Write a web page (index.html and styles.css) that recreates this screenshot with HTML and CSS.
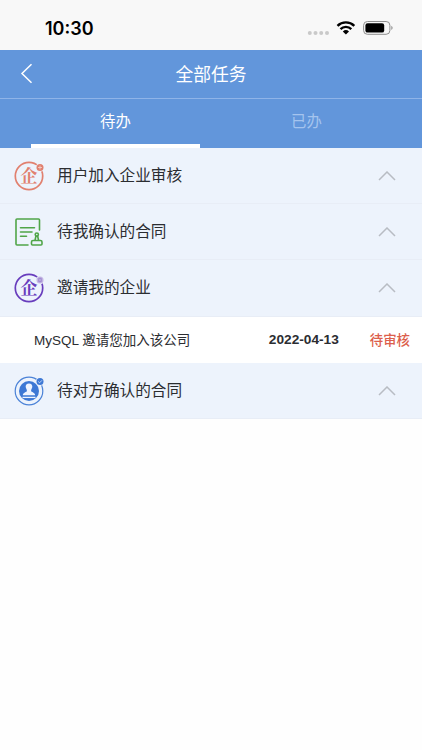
FILE: index.html
```html
<!DOCTYPE html>
<html lang="zh-CN">
<head>
<meta charset="utf-8">
<title>全部任务</title>
<link rel="stylesheet" href="styles.css">
</head>
<body>
<div class="status">
  <span class="time">10:30</span>
  <svg class="signals" width="90" height="20" viewBox="0 0 90 20">
    <g fill="#c9c9c9"><circle cx="3.8" cy="14" r="2"/><circle cx="9.5" cy="14" r="2"/><circle cx="15.2" cy="14" r="2"/><circle cx="21" cy="14" r="2"/></g>
    <g fill="none" stroke="#000" stroke-width="2.4"><path d="M31.5 6.8a12 12 0 0 1 16.8 0"/><path d="M34.5 10.1a7.7 7.700 0 0 1 10.8 0"/></g>
    <path d="M36.8 12.500a4.5 4.5 0 0 1 6.2 0l-3.1 3.1z"/>
    <rect x="57.6" y="2.500" width="26.3" height="12.8" rx="3.8" fill="none" stroke="#8f8f8f"/>
    <rect x="59.4" y="4.200" width="18.8" height="9.4" rx="2.2"/>
    <path d="M85.3 6.800v4.2c1.8-.8 1.8-3.4 0-4.2z" fill="#8f8f8f"/>
  </svg>
</div>
<header class="navbar">
  <svg class="back" width="14" height="22" viewBox="0 0 14 22"><path d="M11.5 1.3L2 10.500l9.500 9.200" fill="none" stroke="#fff" stroke-width="1.5"/></svg>
  <h1>全部任务</h1>
</header>
<nav class="tabs">
  <div class="tab active"><span>待办</span></div>
  <div class="tab"><span>已办</span></div>
</nav>
<main>
  <section class="group">
    <svg class="icon" viewBox="0 0 30 30">
      <circle cx="15" cy="15" r="13.7" fill="none" stroke="#e1806f" stroke-width="1.7"/>
      <text class="seal" x="15" y="21" fill="#e1806f">企</text>
      <circle cx="26" cy="6.500" r="4.300" fill="#edf3fc"/><circle cx="26" cy="6.500" r="3.500" fill="#e1806f"/>
      <path d="M24 6.500h4M26 4.500v4" stroke="#f5d5d0" stroke-width=".8"/>
    </svg>
    <span class="label">用户加入企业审核</span>
    <svg class="chevron" viewBox="0 0 18 10"><path d="M1 9l8-8 8 8"/></svg>
  </section>
  <section class="group">
    <svg class="icon" viewBox="0 0 30 30">
      <g fill="none" stroke="#50a548" stroke-width="1.6" stroke-linecap="round" stroke-linejoin="round">
        <path d="M25.500 13V3q0-1-1-1H3Q2 2 2 3v24q0 1 1 1h11"/>
        <path d="M6.500 10.800h14M6.500 15h11.500M6.500 19.200h6"/>
        <path d="M19 23.500h7.500q1.500 0 1.500 1.500v2q0 1-1 1h-8.500q-1 0-1-1v-2q0-1.500 1.500-1.500zM21 23.200l1-4.200M24.600 23.200l-1-4.200"/>
        <circle cx="22.800" cy="17.600" r="1.600"/>
      </g>
    </svg>
    <span class="label">待我确认的合同</span>
    <svg class="chevron" viewBox="0 0 18 10"><path d="M1 9l8-8 8 8"/></svg>
  </section>
  <section class="group">
    <svg class="icon" viewBox="0 0 30 30">
      <circle cx="15" cy="15" r="13.700" fill="none" stroke="#683dbd" stroke-width="1.700"/>
      <text class="seal" x="15" y="21" fill="#683dbd">企</text>
      <circle cx="26" cy="7" r="4.300" fill="#edf3fc"/><circle cx="26" cy="7" r="3.500" fill="#c3b5e3"/>
      <path d="M24.500 5.500h3v3h-3zM26 4.500v5" fill="none" stroke="#9b84ce" stroke-width=".7"/>
    </svg>
    <span class="label">邀请我的企业</span>
    <svg class="chevron" viewBox="0 0 18 10"><path d="M1 9l8-8 8 8"/></svg>
  </section>
  <div class="task">
    <span class="name">MySQL 邀请您加入该公司</span>
    <span class="date">2022-04-13</span>
    <span class="state">待审核</span>
  </div>
  <section class="group">
    <svg class="icon" viewBox="0 0 30 30">
      <circle cx="15" cy="15" r="13.800" fill="none" stroke="#4b82d7" stroke-width="1.200"/>
      <circle cx="15" cy="15" r="10" fill="#3d78d5"/>
      <path d="M15 7.500c-2.300 0-3.600 1.600-3.300 3.600.2 1.500 1.400 2.500 1.200 4-.2 1.200-3.900 1.400-4.100 4.100h12.400c-.2-2.700-3.900-2.900-4.100-4.100-.2-1.500 1-2.500 1.200-4 .3-2-1-3.600-3.300-3.600z" fill="#eef4ff"/>
      <path d="M8.500 21.400h13" stroke="#eef4ff" stroke-width="1.300"/>
      <circle cx="26" cy="5.500" r="4.300" fill="#edf3fc"/><circle cx="26" cy="5.500" r="3.500" fill="#3d78d5"/>
      <path d="M24.200 5.500l1.400 1.300 2.400-2.500" fill="none" stroke="#dce8fb" stroke-width=".8"/>
    </svg>
    <span class="label">待对方确认的合同</span>
    <svg class="chevron" viewBox="0 0 18 10"><path d="M1 9l8-8 8 8"/></svg>
  </section>
</main>
</body>
</html>
```
FILE: styles.css
```css
* { box-sizing: border-box; }
body {
  margin: 0;
  min-height: 100vh;
  background: #fefefe;
  color: #2b2d31;
  font-family: "Liberation Sans", "Noto Sans CJK SC", sans-serif;
}
.status {
  display: flex;
  justify-content: space-between;
  height: 50px;
  padding: 19px 24px 0 45px;
  background: #f8f8f8;
}
.time {
  font: 600 18px/20px Inter, sans-serif;
  color: #000;
}
.signals { margin-right: 2px; }
.navbar {
  display: grid;
  grid-template-columns: 40px 1fr 40px;
  align-items: center;
  height: 48px;
  background: #6296db;
  color: #fff;
}
.back { margin-left: 20px; }
.navbar h1 {
  margin: 0;
  padding-top: 1px;
  text-align: center;
  font-size: 17.8px;
  line-height: 26px;
  font-weight: 400;
}
.tabs {
  display: grid;
  grid-template-columns: 1fr 1fr;
  column-gap: 22px;
  height: 50px;
  padding: 0 31px;
  border-top: 1.5px solid #8fb4e8;
  background: #6296db;
}
.tab {
  padding-top: 11px;
  text-align: center;
  font-size: 15.4px;
  line-height: 24px;
  color: #a5c4ee;
}
.tab.active {
  border-bottom: 4px solid #fff;
  color: #fff;
}
.group {
  display: flex;
  align-items: center;
  height: 56.2px;
  padding: 0 26px 0 13.5px;
  border-bottom: 1px solid #e8edf6;
  background: #edf3fc;
}
.icon {
  width: 30px;
  height: 30px;
  margin-right: 13.5px;
}
.seal {
  font: 700 17px "Noto Serif CJK SC", "Noto Sans CJK SC", serif;
  text-anchor: middle;
}
.label {
  flex: 1;
  font-size: 15.65px;
  line-height: 24px;
}
.chevron {
  width: 18px;
  height: 10px;
  margin-top: 1px;
  fill: none;
  stroke: #b8bcc3;
  stroke-width: 1.5;
}
.task {
  display: flex;
  align-items: center;
  height: 46.5px;
  padding: 0 12px 2px 34px;
  background: #fff;
  font-size: 13.4px;
}
.name {
  flex: 1;
  font-size: 13.5px;
}
.date {
  margin-right: 31px;
  padding-top: 1px;
  font-weight: 700;
  font-size: 13.7px;
}
.state {
  color: #dc5f4d;
  font-weight: 500;
}
```
